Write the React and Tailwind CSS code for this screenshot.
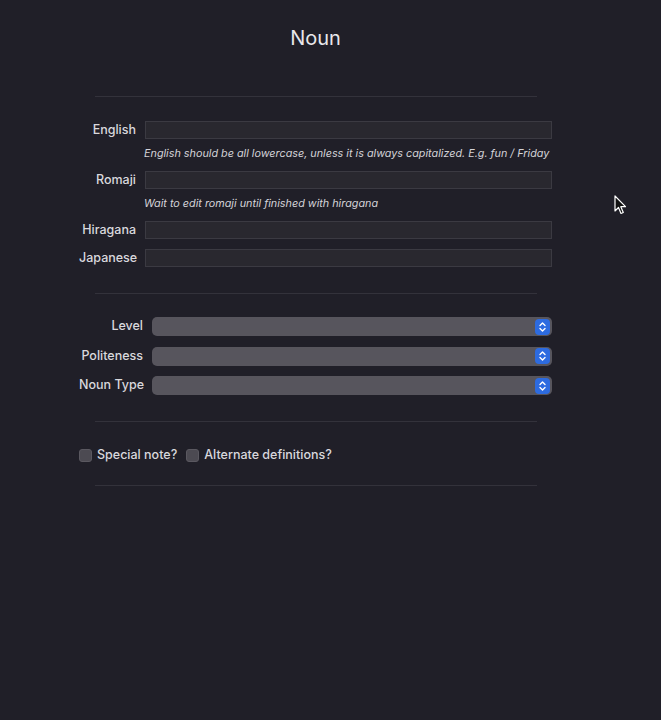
import React from "react";

const font = { fontFamily: "Inter, 'Liberation Sans', sans-serif" };

function TextRow({ label, help }) {
  return (
    <div>
      <div className="flex items-center h-[18px]">
        <label className="w-[57px] text-right text-[12.5px] font-medium text-[#d9d8dd]">{label}</label>
        <input
          type="text"
          className="ml-[9px] w-[407px] h-[18px] bg-[#29282f] border border-[#3b3a42] outline-none"
        />
      </div>
      {help && (
        <p className="ml-[65px] mt-[8px] mb-[10px] h-[14px] leading-[14px] text-[10.8px] italic text-[#d4d3d8] whitespace-nowrap">
          {help}
        </p>
      )}
    </div>
  );
}

function SelectRow({ label }) {
  return (
    <div className="flex items-center h-[19px]">
      <label className="w-[64px] text-right text-[12.5px] font-medium text-[#d9d8dd] whitespace-nowrap">{label}</label>
      <div className="ml-[9px] w-[400px] h-[19px] rounded-[5px] bg-[#57555d] flex items-center justify-end pr-[2px]">
        <div className="w-[15px] h-[16px] rounded-[4px] bg-[#2d6be0] flex items-center justify-center">
          <svg width="9" height="12" viewBox="0 0 9 12" fill="none" stroke="white" strokeWidth="1.4" strokeLinecap="round" strokeLinejoin="round">
            <path d="M2 4.5 L4.5 2 L7 4.5" />
            <path d="M2 7.5 L4.5 10 L7 7.5" />
          </svg>
        </div>
      </div>
    </div>
  );
}

function Check({ label }) {
  return (
    <label className="flex items-center gap-[5px]">
      <span className="w-[13px] h-[13px] rounded-[3px] bg-[#4c4a52] border border-[#5a5860]" />
      <span className="text-[12.5px] font-medium text-[#d9d8dd]">{label}</span>
    </label>
  );
}

export default function App() {
  return (
    <div className="relative w-[661px] h-[720px] bg-[#201f28] overflow-hidden" style={font}>
      <h1 className="pt-[25px] h-[52px] text-center text-[20px] leading-[26px] text-[#e8e7eb]">
        <span className="inline-block ml-[-30px]">Noun</span>
      </h1>

      <hr className="mt-[44px] ml-[95px] w-[442px] border-0 border-t border-[#33323b]" />

      <div className="ml-[79px] mt-[24px]">
        <TextRow
          label="English"
          help="English should be all lowercase, unless it is always capitalized. E.g. fun / Friday"
        />
        <TextRow label="Romaji" help="Wait to edit romaji until finished with hiragana" />
        <div className="mb-[10px]">
          <TextRow label="Hiragana" />
        </div>
        <TextRow label="Japanese" />
      </div>

      <hr className="mt-[26px] ml-[95px] w-[442px] border-0 border-t border-[#33323b]" />

      <div className="ml-[79px] mt-[23px] flex flex-col gap-[10.5px]">
        <SelectRow label="Level" />
        <SelectRow label="Politeness" />
        <SelectRow label="Noun Type" />
      </div>

      <hr className="mt-[26px] ml-[95px] w-[442px] border-0 border-t border-[#33323b]" />

      <div className="ml-[79px] mt-[26px] h-[14px] flex items-center gap-[9px]">
        <Check label="Special note?" />
        <Check label="Alternate definitions?" />
      </div>

      <hr className="mt-[23px] ml-[95px] w-[442px] border-0 border-t border-[#33323b]" />

      <svg className="absolute left-[614px] top-[195px]" width="14" height="20" viewBox="0 0 14 20">
        <path d="M1 1 L1 16 L4.5 12.5 L7 18.5 L9.3 17.5 L6.8 11.7 L11.5 11.7 Z" fill="#111" stroke="#fff" strokeWidth="1.2" strokeLinejoin="round" />
      </svg>
    </div>
  );
}
